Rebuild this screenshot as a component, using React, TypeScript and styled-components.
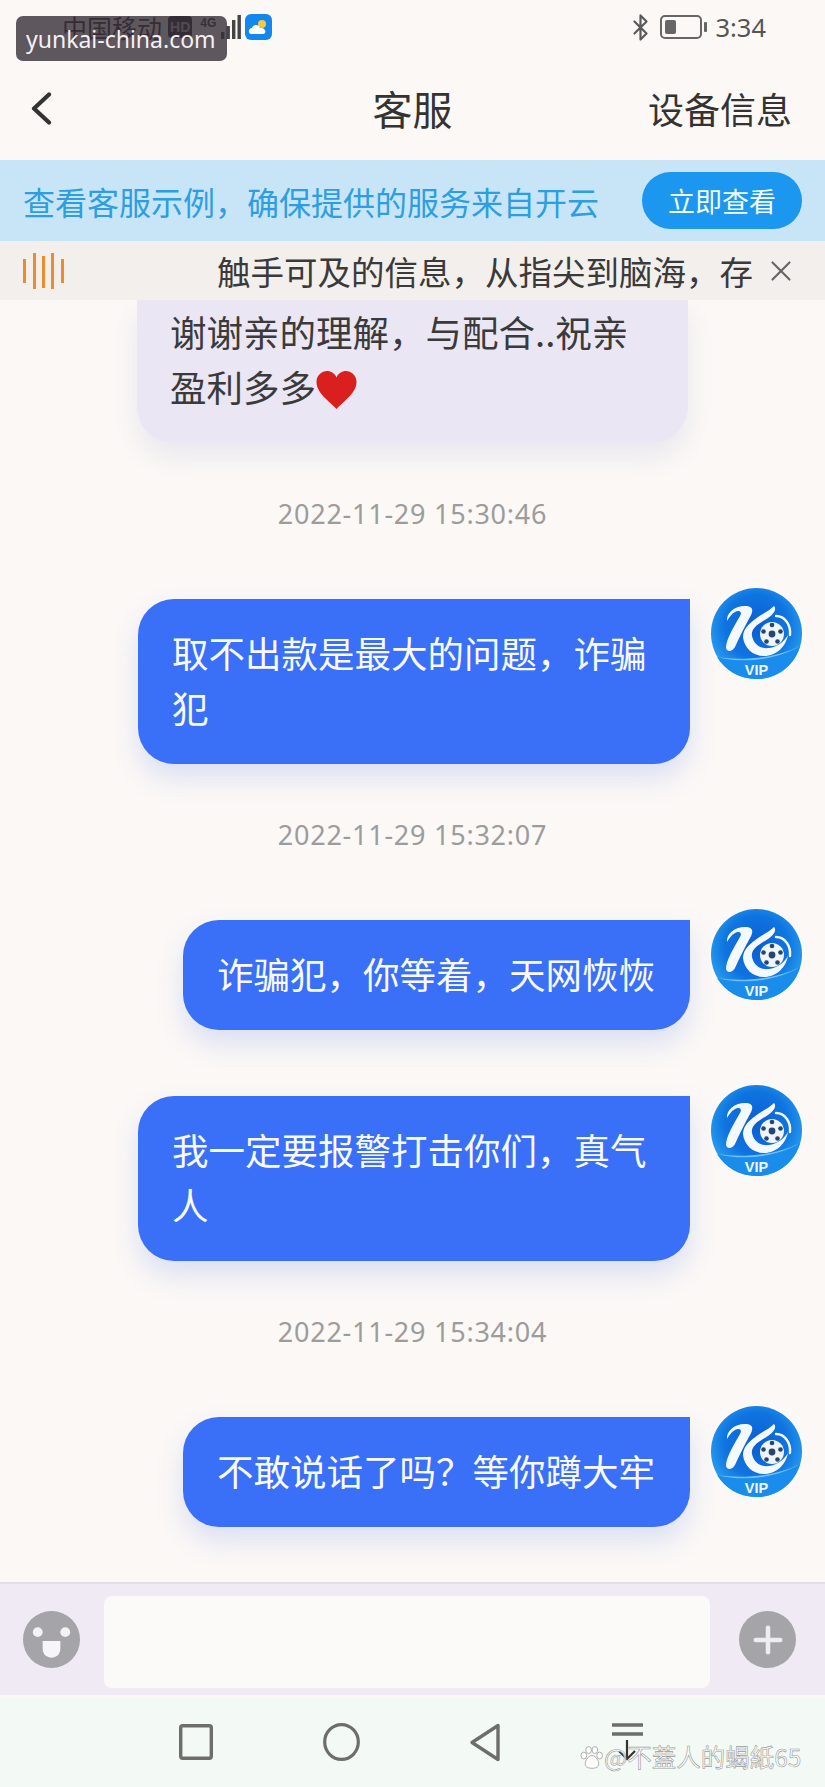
import React from 'react';
import styled, { createGlobalStyle } from 'styled-components';
import { Bluetooth, Plus, X } from 'lucide-react';

const FONT = '"Noto Sans CJK SC", "Noto Sans", "Liberation Sans", sans-serif';

const GlobalStyle = createGlobalStyle`
  html, body {
    margin: 0;
    padding: 0;
    background: #fbf8f6;
  }
  body {
    font-family: ${FONT};
  }
`;

const MESSAGES = [
  { time: '2022-11-29 15:30:46', lines: ['取不出款是最大的问题，诈骗犯'] },
  { time: '2022-11-29 15:32:07', lines: ['诈骗犯，你等着，天网恢恢', '我一定要报警打击你们，真气人'] },
  { time: '2022-11-29 15:34:04', lines: ['不敢说话了吗？等你蹲大牢'] },
];

const LogoAvatar = () => (
  <AvatarSvg viewBox="0 0 91 91">
    <defs>
      <radialGradient id="logoBlue" cx="0.5" cy="0.42" r="0.58">
        <stop offset="0" stopColor="#0a5ed2" />
        <stop offset="0.6" stopColor="#0f74e0" />
        <stop offset="1" stopColor="#2ba2f0" />
      </radialGradient>
    </defs>
    <circle cx="45.5" cy="45.5" r="45.5" fill="url(#logoBlue)" />
    <path d="M6 69 C 32 76 66 72 89 58 C 83 78 66 91 45.5 91 C 28 91 14 82 6 69 Z" fill="#1a8cec" />
    <path d="M6 69 C 32 76 66 72 89 58 C 66 70 32 73 6 69 Z" fill="#6cc4f6" />
    <path
      d="M16 33 C 15 25 24 17 36 18 C 43 19 42 24 39 29 C 33 40 28 50 24 59 C 21 64 16 64 15 60 C 15 52 22 40 29 28 C 32 23 27 22 24 24 C 20 26 18 30 16 33 Z"
      fill="#f4f9fe"
    />
    <path
      d="M63 18 C 67 22 60 29 52 33 C 44 38 40 42 41 48 C 43 57 50 61 58 60 C 66 59 73 54 77 47 C 75 58 66 68 53 68 C 42 68 33 60 32 49 C 32 40 40 34 47 29 C 53 25 58 23 63 18 Z"
      fill="#f4f9fe"
    />
    <path d="M65 28 C 74 28 80 37 79 47" fill="none" stroke="#f4f9fe" strokeWidth="2.4" strokeLinecap="round" />
    <circle cx="61" cy="46" r="12" fill="#eef4fa" />
    <circle cx="61" cy="46" r="3.4" fill="#27466c" />
    <circle cx="61" cy="37" r="2.3" fill="#27466c" />
    <circle cx="69.5" cy="43.5" r="2.3" fill="#27466c" />
    <circle cx="52.5" cy="43.5" r="2.3" fill="#27466c" />
    <circle cx="55.5" cy="53.5" r="2.3" fill="#27466c" />
    <circle cx="66.5" cy="53.5" r="2.3" fill="#27466c" />
    <text x="45.5" y="87" textAnchor="middle" fontSize="14.5" fontWeight="700" fill="#eef8ff" fontFamily='"Liberation Sans", sans-serif'>
      VIP
    </text>
  </AvatarSvg>
);

const Heart = () => (
  <HeartSvg viewBox="0 0 41 38">
    <path
      d="M20.5 38 C 13 30 0.5 22 0.5 11 C 0.5 4 6 0 11 0 C 15 0 19 2.5 20.5 6.5 C 22 2.5 26 0 30 0 C 35 0 40.5 4 40.5 11 C 40.5 22 28 30 20.5 38 Z"
      fill="#d9201f"
    />
  </HeartSvg>
);

const SignalBars = () => (
  <svg width="20" height="24" viewBox="0 0 20 24">
    <rect x="0" y="17" width="3.4" height="7" fill="#444" />
    <rect x="5.5" y="11" width="3.4" height="13" fill="#444" />
    <rect x="11" y="5" width="3.4" height="19" fill="#444" />
    <rect x="16.5" y="0" width="3.4" height="24" fill="#444" />
  </svg>
);

const WeatherIcon = () => (
  <svg width="27" height="26" viewBox="0 0 27 26">
    <rect width="27" height="26" rx="6" fill="#1487ee" />
    <circle cx="17" cy="10" r="4" fill="#f7c93e" />
    <path d="M6 20 C 3 20 3 14 7 14 C 8 10 14 10 15 14 C 21 13 22 20 18 20 Z" fill="#fff" />
  </svg>
);

const VoiceBars = () => (
  <svg width="41" height="36" viewBox="0 0 41 36">
    {[
      [0, 6, 24],
      [10, 0, 36],
      [19, 3, 32],
      [28, 0, 36],
      [38, 6, 24],
    ].map(([x, y, h]) => (
      <rect key={x} x={x} y={y} width="3" height={h} fill="#ec8c30" />
    ))}
  </svg>
);

const NavIcons = () => (
  <>
    <svg width="34" height="36" viewBox="0 0 34 36">
      <rect x="1.7" y="1.7" width="30.6" height="32.6" rx="2" fill="none" stroke="#6d6d6d" strokeWidth="3.4" />
    </svg>
    <svg width="37" height="38" viewBox="0 0 37 38">
      <ellipse cx="18.5" cy="19" rx="16.8" ry="17.4" fill="none" stroke="#6d6d6d" strokeWidth="3.2" />
    </svg>
    <svg width="32" height="39" viewBox="0 0 32 39">
      <path d="M29 2.5 V36.5 L3 19.5 Z" fill="none" stroke="#6d6d6d" strokeWidth="3.4" strokeLinejoin="round" />
    </svg>
    <svg width="32" height="39" viewBox="0 0 32 39">
      <path d="M1 2 H32 M1 11 H32" stroke="#6d6d6d" strokeWidth="3.4" />
      <path d="M16 17 V36 M8 28 L16 36 L24 28" stroke="#333" strokeWidth="2.2" fill="none" />
    </svg>
  </>
);

const App = () => {
  return (
    <Page>
      <GlobalStyle />
      <StatusBar>
        <StatusGroup>
          <Carrier>中国移动</Carrier>
          <HdChip>HD</HdChip>
          <NetTag>4G</NetTag>
          <SignalBars />
          <WeatherSlot>
            <WeatherIcon />
          </WeatherSlot>
        </StatusGroup>
        <StatusGroup>
          <Bluetooth size={29} color="#5a5a5a" strokeWidth={1.8} />
          <Battery>
            <BatteryLevel />
          </Battery>
          <BatteryNub />
          <Clock>3:34</Clock>
        </StatusGroup>
        <SiteLabel>yunkai-china.com</SiteLabel>
      </StatusBar>

      <NavBar>
        <svg width="22" height="33" viewBox="0 0 22 33">
          <path d="M19 2.5 L4 16.5 L19 30.5" fill="none" stroke="#333" strokeWidth="4.2" strokeLinecap="round" strokeLinejoin="round" />
        </svg>
        <NavTitle>客服</NavTitle>
        <NavAction>设备信息</NavAction>
      </NavBar>

      <Banner>
        <BannerText>查看客服示例，确保提供的服务来自开云</BannerText>
        <BannerButton>立即查看</BannerButton>
      </Banner>

      <Notice>
        <VoiceBars />
        <NoticeText>触手可及的信息，从指尖到脑海，存</NoticeText>
        <X size={34} color="#666" strokeWidth={1.5} />
      </Notice>

      <Chat>
        <IncomingBubble>
          谢谢亲的理解，与配合..祝亲
          <br />
          盈利多多
          <Heart />
        </IncomingBubble>
        {MESSAGES.map((group) => (
          <React.Fragment key={group.time}>
            <Time>{group.time}</Time>
            <Group>
              {group.lines.map((line) => (
                <Row key={line}>
                  <OutgoingBubble>{line}</OutgoingBubble>
                  <LogoAvatar />
                </Row>
              ))}
            </Group>
          </React.Fragment>
        ))}
      </Chat>

      <InputBar>
        <RoundIcon>
          <svg width="58" height="58" viewBox="0 0 58 58">
            <circle cx="15" cy="21" r="5" fill="#f5f2f6" />
            <circle cx="43" cy="21" r="5" fill="#f5f2f6" />
            <path d="M20 30 H38 V38 C38 50 20 50 20 38 Z" fill="#f8f5f8" />
          </svg>
        </RoundIcon>
        <InputBox />
        <RoundIcon>
          <Plus size={42} color="#f0edf2" strokeWidth={2.6} />
        </RoundIcon>
      </InputBar>

      <BottomNav>
        <NavIcons />
        <Credit>
          <svg width="23" height="23" viewBox="0 0 24 24">
            <g fill="#fff" stroke="#aaa" strokeWidth="1">
              <ellipse cx="4" cy="10" rx="3" ry="3.6" />
              <ellipse cx="9" cy="4.2" rx="3" ry="3.6" />
              <ellipse cx="15.5" cy="4.2" rx="3" ry="3.6" />
              <ellipse cx="20.5" cy="10" rx="3" ry="3.6" />
              <path d="M12.5 10 C 17 10 21 17 19 21 C 17 24 8 24 6 21 C 4 17 8 10 12.5 10 Z" />
            </g>
          </svg>
          <CreditText>@不蓋人的蝎紙65</CreditText>
        </Credit>
      </BottomNav>
    </Page>
  );
};

const Page = styled.div`
  width: 825px;
  height: 1787px;
  display: flex;
  flex-direction: column;
  overflow: hidden;
  background: #fbf8f6;
`;

const StatusBar = styled.div`
  position: relative;
  height: 70px;
  flex: none;
  box-sizing: border-box;
  padding: 14px 59px 0 62px;
  display: flex;
  justify-content: space-between;
  align-items: flex-start;
`;

const StatusGroup = styled.div`
  display: flex;
  align-items: center;
  height: 26px;
`;

const Carrier = styled.span`
  font-size: 25px;
  line-height: 26px;
  color: #2a2a2a;
  white-space: nowrap;
`;

const HdChip = styled.span`
  margin-left: 6px;
  padding: 2px 2px;
  border-radius: 4px;
  background: #2a2a2a;
  color: #bbb;
  font-family: 'Liberation Sans', sans-serif;
  font-size: 14px;
  line-height: 18px;
  font-weight: 700;
`;

const NetTag = styled.span`
  margin: 0 5px 8px 8px;
  font-family: 'Liberation Sans', sans-serif;
  font-size: 12px;
  line-height: 14px;
  font-weight: 700;
  color: #333;
`;

const WeatherSlot = styled.span`
  margin-left: 4px;
  display: flex;
`;

const SiteLabel = styled.div`
  position: absolute;
  left: 16px;
  top: 16px;
  width: 211px;
  height: 45px;
  box-sizing: border-box;
  padding-left: 10px;
  border-radius: 7px;
  background: rgba(56, 46, 56, 0.8);
  color: #f3f1f3;
  font-family: 'Noto Sans', sans-serif;
  font-size: 23px;
  line-height: 47px;
  white-space: nowrap;
`;

const Battery = styled.div`
  width: 42px;
  height: 24px;
  margin-left: 5px;
  box-sizing: border-box;
  padding: 3px;
  border: 2px solid #666;
  border-radius: 5px;
`;

const BatteryLevel = styled.div`
  width: 11px;
  height: 100%;
  background: #666;
  border-radius: 2px;
`;

const BatteryNub = styled.div`
  width: 3px;
  height: 10px;
  margin: 0 8px 0 2px;
  background: #666;
  border-radius: 1px;
`;

const Clock = styled.span`
  font-size: 25.5px;
  color: #555;
  font-family: 'Noto Sans', sans-serif;
`;

const NavBar = styled.div`
  position: relative;
  height: 90px;
  flex: none;
  box-sizing: border-box;
  padding: 0 33px 14px 30px;
  display: flex;
  justify-content: space-between;
  align-items: center;
`;

const NavTitle = styled.div`
  position: absolute;
  left: 0;
  right: 0;
  top: 8px;
  text-align: center;
  font-size: 40px;
  line-height: 60px;
  color: #333;
`;

const NavAction = styled.div`
  font-size: 36px;
  line-height: 52px;
  color: #333;
`;

const Banner = styled.div`
  height: 81px;
  flex: none;
  box-sizing: border-box;
  padding: 0 23px 0 23px;
  display: flex;
  align-items: center;
  justify-content: space-between;
  background: #c8e5f8;
`;

const BannerText = styled.div`
  font-size: 32px;
  color: #2d9ee2;
  white-space: nowrap;
`;

const BannerButton = styled.div`
  width: 160px;
  height: 57px;
  border-radius: 29px;
  background: #1b97f0;
  color: #f4fbff;
  font-size: 27px;
  line-height: 57px;
  text-align: center;
`;

const Notice = styled.div`
  height: 59px;
  flex: none;
  box-sizing: border-box;
  padding: 0 26px 0 23px;
  display: flex;
  align-items: center;
  background: #f3efec;
  position: relative;
  z-index: 1;
`;

const NoticeText = styled.div`
  margin: 0 9px 0 153px;
  width: 538px;
  overflow: hidden;
  white-space: nowrap;
  font-size: 33.5px;
  color: #3a3a3a;
`;

const Chat = styled.div`
  flex: 1;
  min-height: 0;
  overflow: hidden;
  display: flex;
  flex-direction: column;
  gap: 52px;
`;

const IncomingBubble = styled.div`
  width: 551px;
  height: 143px;
  flex: none;
  box-sizing: border-box;
  margin-left: 137px;
  padding: 4px 33px 0;
  border-radius: 0 0 36px 36px;
  background: #ebe6f4;
  box-shadow: 0 14px 26px rgba(190, 195, 220, 0.28);
  color: #3a3a3a;
  font-size: 36.5px;
  line-height: 55px;
`;

const HeartSvg = styled.svg`
  width: 41px;
  height: 38px;
  vertical-align: -7px;
`;

const Time = styled.div`
  height: 41px;
  flex: none;
  text-align: center;
  font-family: 'Noto Sans', sans-serif;
  font-size: 27px;
  letter-spacing: 0.75px;
  line-height: 37px;
  color: #9c9c9c;
`;

const Group = styled.div`
  display: flex;
  flex-direction: column;
  gap: 55px;
`;

const Row = styled.div`
  display: flex;
  justify-content: flex-end;
  align-items: flex-start;
  gap: 21px;
  padding-right: 23px;
`;

const OutgoingBubble = styled.div`
  max-width: 552px;
  margin-top: 11px;
  box-sizing: border-box;
  padding: 25.5px 35px 29.5px 34px;
  border-radius: 36px 0 36px 36px;
  background: #3a6ff7;
  box-shadow: 0 14px 26px rgba(150, 170, 235, 0.3);
  color: #f8faff;
  font-size: 36.5px;
  line-height: 55px;
`;

const AvatarSvg = styled.svg`
  width: 91px;
  height: 91px;
  flex: none;
`;

const InputBar = styled.div`
  height: 115px;
  flex: none;
  box-sizing: border-box;
  padding: 0 29px 0 23px;
  display: flex;
  align-items: center;
  gap: 24px;
  background: #efeaf3;
  border-top: 2px solid #e2dee6;
  border-bottom: 2px solid #faf8fb;
`;

const RoundIcon = styled.div`
  width: 57px;
  height: 57px;
  flex: none;
  border-radius: 50%;
  background: #a5a4a9;
  display: flex;
  align-items: center;
  justify-content: center;
`;

const InputBox = styled.div`
  width: 606px;
  height: 92px;
  margin: 5px 5px 0 0;
  border-radius: 8px;
  background: #fcf9f9;
`;

const BottomNav = styled.div`
  position: relative;
  height: 90px;
  flex: none;
  box-sizing: border-box;
  padding: 0 182px 0 179px;
  display: flex;
  align-items: center;
  justify-content: space-between;
  background: #f3faf6;
`;

const Credit = styled.div`
  position: absolute;
  left: 580px;
  top: 47px;
  display: flex;
  align-items: center;
  gap: 1px;
`;

const CreditText = styled.span`
  font-size: 24.5px;
  line-height: 26px;
  white-space: nowrap;
  color: rgba(255, 255, 255, 0.85);
  -webkit-text-stroke: 0.6px #9a9a9a;
`;

export default App;
